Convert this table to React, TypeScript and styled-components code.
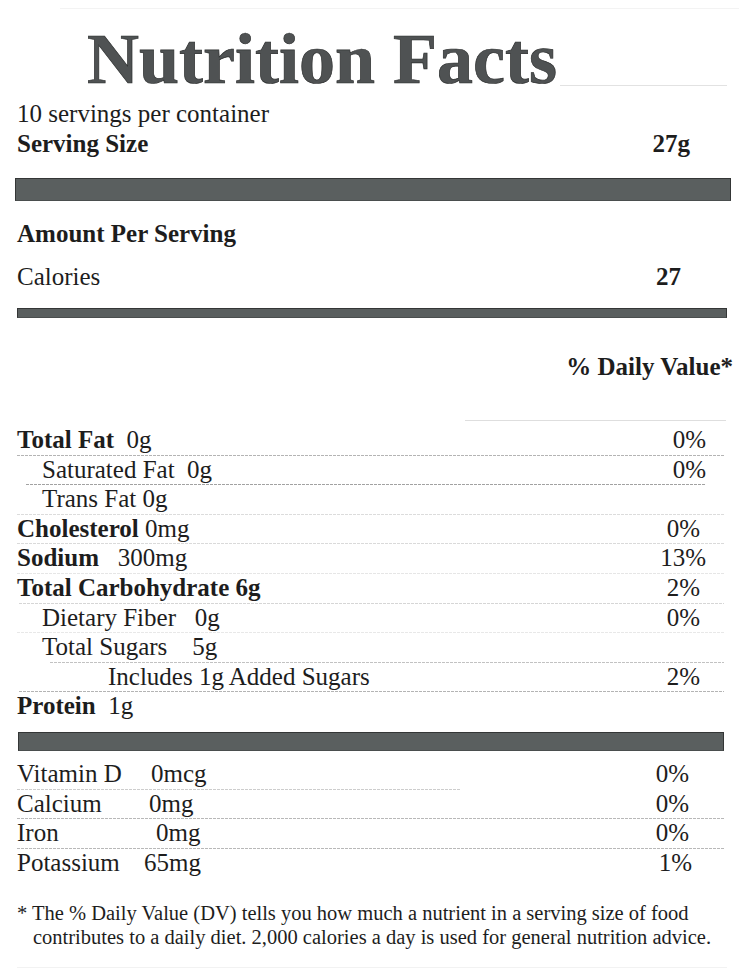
import React from "react";
import styled, { createGlobalStyle } from "styled-components";

const GlobalStyle = createGlobalStyle`
  html, body {
    margin: 0;
    background: #fff;
  }
`;

const Page = styled.div`
  box-sizing: border-box;
  width: 739px;
  min-height: 977px;
  padding: 0 12px 0 17px;
  background: #fff;
  color: #1d1d1d;
  font-family: "Liberation Serif", "Times New Roman", serif;
  font-size: 25px;
`;

const ScanLine = styled.div<{ $top: number; $left: number; $right: number; $tone: string }>`
  height: 1px;
  margin: ${(p) => p.$top}px ${(p) => p.$right}px 0 ${(p) => p.$left}px;
  background: ${(p) => p.$tone};
`;

const TitleRow = styled.div`
  display: flex;
  align-items: flex-end;
  margin-top: 14px;
`;

const Title = styled.h1`
  margin: 0 0 0 70px;
  font-size: 72px;
  line-height: 72px;
  font-weight: 700;
  color: #4f5253;
  -webkit-text-stroke: 0.7px #2e3030;
  white-space: nowrap;
`;

const TitleRule = styled.div`
  flex: 1;
  height: 1px;
  margin: 0 0 9px 3px;
  background: #e2e2e2;
`;

const Line = styled.div<{ $gap?: number; $bold?: boolean }>`
  margin-top: ${(p) => p.$gap ?? 0}px;
  line-height: 30px;
  font-weight: ${(p) => (p.$bold ? 700 : 400)};
`;

const SplitLine = styled(Line)<{ $inset: number }>`
  display: flex;
  justify-content: space-between;
  padding-right: ${(p) => p.$inset}px;
`;

const Bold = styled.span`
  font-weight: 700;
  white-space: pre;
`;

const Plain = styled.span`
  font-weight: 400;
  white-space: pre;
`;

const Bar = styled.div<{ $gap: number; $height: number; $left: number; $right: number }>`
  box-sizing: border-box;
  height: ${(p) => p.$height}px;
  margin: ${(p) => p.$gap}px ${(p) => p.$right}px 0 ${(p) => p.$left}px;
  background: #5a5f5f;
  border: 1.5px solid #343636;
  border-bottom-color: #4a4e4e;
`;

const DailyHeader = styled.div`
  margin: 34px -6px 0 0;
  line-height: 30px;
  font-weight: 700;
  text-align: right;
`;

const Table = styled.div<{ $gap: number }>`
  margin-top: ${(p) => p.$gap}px;
`;

const Row = styled.div<{ $indent: number; $inset: number; $from: number; $to: number; $tone: string }>`
  display: flex;
  justify-content: space-between;
  line-height: 28.6px;
  padding: 0 ${(p) => p.$inset}px 1px ${(p) => p.$indent}px;
  background-image: repeating-linear-gradient(
    90deg,
    ${(p) => p.$tone} 0 3px,
    transparent 3px 4px
  );
  background-repeat: no-repeat;
  background-position: ${(p) => p.$from}px 100%;
  background-size: ${(p) => p.$to - p.$from}px 1px;
`;

const VitLabel = styled.span`
  display: inline-block;
  width: 127px;
`;

const VitAmount = styled.span<{ $pad: number }>`
  padding-left: ${(p) => p.$pad}px;
`;

const Footnote = styled.p`
  margin: 23px 0 0;
  padding-left: 16px;
  text-indent: -16px;
  font-size: 20.5px;
  line-height: 24px;
`;

type Nutrient = {
  bold?: string;
  plain?: string;
  dv?: string;
  indent: number;
  inset: number;
  rule?: [number, number, string];
};

const nutrients: Nutrient[] = [
  { bold: "Total Fat", plain: "  0g", dv: "0%", indent: 0, inset: 21, rule: [0, 707, "#b4b4b4"] },
  { plain: "Saturated Fat  0g", dv: "0%", indent: 25, inset: 21, rule: [9, 689, "#a2a2a2"] },
  { plain: "Trans Fat 0g", indent: 25, inset: 21, rule: [0, 707, "#dcdcdc"] },
  { bold: "Cholesterol", plain: " 0mg", dv: "0%", indent: 0, inset: 27, rule: [0, 707, "#dadada"] },
  { bold: "Sodium", plain: "   300mg", dv: "13%", indent: 0, inset: 21, rule: [0, 707, "#e6e6e6"] },
  { bold: "Total Carbohydrate 6g", dv: "2%", indent: 0, inset: 27, rule: [2, 707, "#d6d6d6"] },
  { plain: "Dietary Fiber   0g", dv: "0%", indent: 25, inset: 27, rule: [0, 707, "#e8e8e8"] },
  { plain: "Total Sugars    5g", indent: 25, inset: 27, rule: [33, 707, "#c2c2c2"] },
  { plain: "Includes 1g Added Sugars", dv: "2%", indent: 91, inset: 27, rule: [2, 707, "#b4b4b4"] },
  { bold: "Protein", plain: "  1g", indent: 0, inset: 27 },
];

type Vitamin = {
  name: string;
  amount: string;
  pad: number;
  dv: string;
  inset: number;
  rule?: [number, number, string];
};

const vitamins: Vitamin[] = [
  { name: "Vitamin D", amount: "0mcg", pad: 7, dv: "0%", inset: 38, rule: [0, 443, "#cdcdcd"] },
  { name: "Calcium", amount: "0mg", pad: 5, dv: "0%", inset: 38, rule: [0, 707, "#b8b8b8"] },
  { name: "Iron", amount: "0mg", pad: 12, dv: "0%", inset: 38, rule: [0, 707, "#b8b8b8"] },
  { name: "Potassium", amount: "65mg", pad: 0, dv: "1%", inset: 35 },
];

const NONE: [number, number, string] = [0, 0, "transparent"];

export default function App() {
  return (
    <Page>
      <GlobalStyle />
      <ScanLine $top={8} $left={43} $right={-12} $tone="#f3f3f3" />
      <TitleRow>
        <Title>Nutrition Facts</Title>
        <TitleRule />
      </TitleRow>

      <Line $gap={4}>10 servings per container</Line>
      <SplitLine $bold $inset={37}>
        <span>Serving Size</span>
        <span>27g</span>
      </SplitLine>

      <Bar $gap={19} $height={23} $left={-2} $right={-4} />

      <Line $gap={18} $bold>
        Amount Per Serving
      </Line>
      <SplitLine $gap={13} $inset={46}>
        <span>Calories</span>
        <Bold>27</Bold>
      </SplitLine>

      <Bar $gap={16} $height={10} $left={0} $right={0} />

      <DailyHeader>% Daily Value*</DailyHeader>
      <ScanLine $top={38} $left={448} $right={1} $tone="#dedede" />

      <Table $gap={5}>
        {nutrients.map((n, i) => {
          const [from, to, tone] = n.rule ?? NONE;
          return (
            <Row key={i} $indent={n.indent} $inset={n.inset} $from={from} $to={to} $tone={tone}>
              <span>
                {n.bold && <Bold>{n.bold}</Bold>}
                {n.plain && <Plain>{n.plain}</Plain>}
              </span>
              <span>{n.dv}</span>
            </Row>
          );
        })}
      </Table>

      <Bar $gap={10} $height={19} $left={1} $right={3} />

      <Table $gap={9}>
        {vitamins.map((v) => {
          const [from, to, tone] = v.rule ?? NONE;
          return (
            <Row key={v.name} $indent={0} $inset={v.inset} $from={from} $to={to} $tone={tone}>
              <span>
                <VitLabel>{v.name}</VitLabel>
                <VitAmount $pad={v.pad}>{v.amount}</VitAmount>
              </span>
              <span>{v.dv}</span>
            </Row>
          );
        })}
      </Table>

      <Footnote>
        * The % Daily Value (DV) tells you how much a nutrient in a serving size of food
        <br />
        contributes to a daily diet. 2,000 calories a day is used for general nutrition advice.
      </Footnote>
      <ScanLine $top={18} $left={0} $right={0} $tone="#f2f2f2" />
    </Page>
  );
}
